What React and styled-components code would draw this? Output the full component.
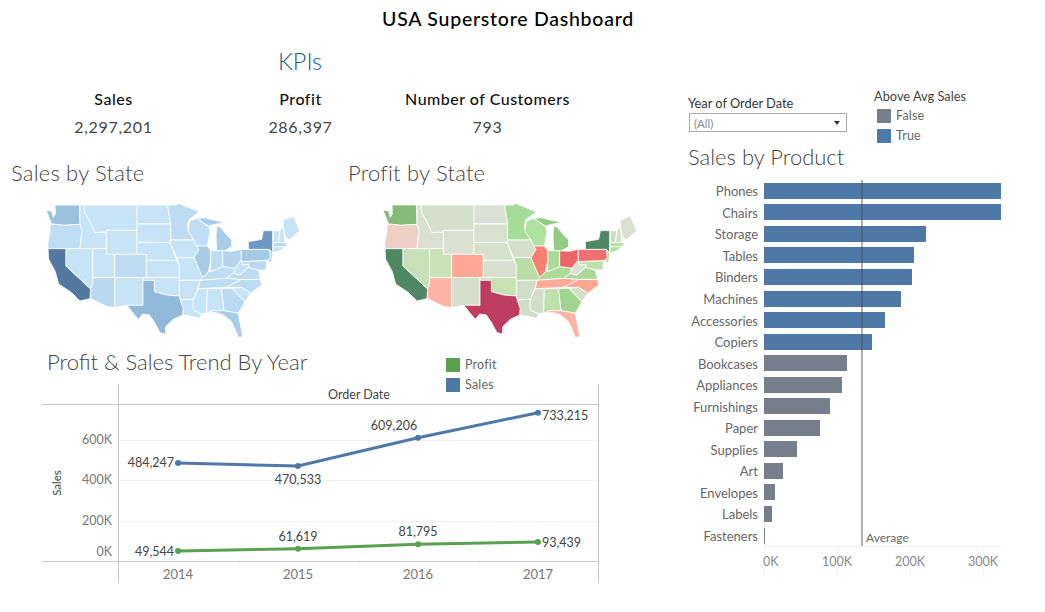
import React from "react";
import styled, { createGlobalStyle } from "styled-components";

const GlobalStyle = createGlobalStyle`
  html, body { margin: 0; padding: 0; background: #fff; }
  body { font-family: "Lato", "Open Sans", sans-serif; color: #333; }
`;

const Page = styled.div`
  width: 1045px;
  height: 612px;
  overflow: hidden;
  background: #fff;
`;
const Header = styled.h1`
  margin: 0;
  height: 38px;
  line-height: 38px;
  text-align: center;
  font-size: 19.5px;
  font-weight: 500;
  letter-spacing: 0.75px;
  color: #000;
  width: 1016px;
`;
const Columns = styled.div`
  display: grid;
  grid-template-columns: 667px 378px;
`;
const Left = styled.div`
  display: flex;
  flex-direction: column;
`;
const KpiHeading = styled.div`
  width: 600px;
  height: 46px;
  line-height: 46px;
  text-align: center;
  font-size: 23.5px;
  font-weight: 300;
  color: #1f5f7f;
`;
const KpiRow = styled.div`
  display: grid;
  grid-template-columns: repeat(3, 187px);
  margin-left: 20px;
  height: 76px;
`;
const Kpi = styled.div`
  text-align: center;
`;
const KpiLabel = styled.div`
  height: 30px;
  line-height: 30px;
  font-size: 16px;
  font-weight: 500;
  letter-spacing: 0.5px;
  color: #111;
`;
const KpiValue = styled.div`
  height: 26px;
  line-height: 26px;
  font-size: 16px;
  letter-spacing: 0.7px;
  color: #444;
`;
const Maps = styled.div`
  display: grid;
  grid-template-columns: 337px 330px;
`;
const SectionTitle = styled.h2`
  margin: 0;
  height: 30px;
  line-height: 26px;
  font-size: 22px;
  font-weight: 300;
  letter-spacing: 0.2px;
  color: #444;
  padding-left: 11px;
`;
const MapSvg = styled.svg`
  display: block;
  width: 330px;
  height: 160px;
`;
const TrendHeader = styled.div`
  display: flex;
  height: 34px;
  padding-left: 47px;
`;
const TrendTitle = styled.h2`
  margin: 0;
  width: 399px;
  line-height: 24px;
  font-size: 22px;
  font-weight: 300;
  color: #444;
`;
const TrendLegend = styled.div`
  display: flex;
  flex-direction: column;
  gap: 6px;
  padding-top: 8px;
  position: relative;
  z-index: 1;
`;
const LegendRow = styled.div`
  display: flex;
  align-items: center;
  gap: 5px;
  height: 14px;
  font-size: 12.5px;
  letter-spacing: 0.2px;
  color: #666;
`;
const LegendText = styled.span`
  position: relative;
  top: -1px;
`;
const Swatch = styled.span`
  width: 14px;
  height: 14px;
  background: ${(p) => p.$color};
  flex: none;
`;
const TrendSvg = styled.svg`
  display: block;
  width: 660px;
  height: 200px;
  text {
    font-family: "Lato", "Open Sans", sans-serif;
  }
`;
const Right = styled.div`
  display: flex;
  flex-direction: column;
  padding: 50px 0 0 21px;
`;
const Controls = styled.div`
  display: flex;
  height: 57px;
`;
const Filter = styled.div`
  width: 160px;
  margin-right: 26px;
  padding-top: 7px;
`;
const FilterLabel = styled.div`
  height: 18px;
  line-height: 16px;
  font-size: 12.8px;
  color: #333;
`;
const Select = styled.div`
  box-sizing: border-box;
  width: 158px;
  height: 19px;
  margin-left: 1px;
  padding: 1px 6px 0 4px;
  border: 1px solid #aaa;
  display: flex;
  align-items: center;
  justify-content: space-between;
  font-size: 11.5px;
  color: #888;
`;
const Caret = styled.span`
  width: 0;
  height: 0;
  border-left: 3px solid transparent;
  border-right: 3px solid transparent;
  border-top: 4px solid #333;
`;
const AvgLegend = styled.div`
  display: flex;
  flex-direction: column;
`;
const AvgTitle = styled.div`
  height: 21px;
  line-height: 16px;
  font-size: 12.8px;
  color: #444;
`;
const AvgItems = styled.div`
  display: flex;
  flex-direction: column;
  gap: 6px;
  padding-left: 3px;
`;
const ProductTitle = styled.h2`
  margin: 0;
  height: 35px;
  line-height: 24px;
  font-size: 22px;
  font-weight: 300;
  color: #444;
`;
const BarPlot = styled.div`
  position: relative;
  margin-left: -28px;
  width: 341px;
`;
const BarRow = styled.div`
  display: grid;
  grid-template-columns: 98px 6px 237px;
  height: 21.56px;
  align-items: center;
`;
const BarLabel = styled.div`
  text-align: right;
  font-size: 13px;
  color: #666;
  line-height: 18px;
  padding-top: 1px;
`;
const BarTrack = styled.div`
  grid-column: 3;
  height: 100%;
  display: flex;
  align-items: center;
  box-shadow: inset 1px 0 0 #eee;
`;
const Bar = styled.div`
  height: 16px;
  background: ${(p) => (p.$above ? "#4e79a7" : "#767f8b")};
`;
const AverageLine = styled.div`
  position: absolute;
  left: 201px;
  top: 0;
  bottom: 0;
  width: 2px;
  background: rgba(70, 70, 70, 0.42);
`;
const AverageText = styled.span`
  position: absolute;
  left: 206px;
  bottom: 1px;
  font-size: 12px;
  color: #666;
`;
const Axis = styled.div`
  display: flex;
  width: 237px;
  margin-left: 76px;
  border-top: 1px solid #eee;
`;
const Tick = styled.div`
  width: 73px;
  flex: none;
  height: 28px;
  box-shadow: inset 1px 0 0 #f0f0f0;
  position: relative;
`;
const TickLabel = styled.span`
  position: absolute;
  top: 7px;
  left: ${(p) => (p.$first ? "-1px" : "0")};
  transform: ${(p) => (p.$first ? "none" : "translateX(-50%)")};
  font-size: 12.5px;
  line-height: 15px;
  color: #888;
  background: #fff;
`;

const states = {
  WA: "165,45 238,45 240,103 192,106 165,103 155,102 148,85 138,60 155,63 160,82 166,72",
  OR: "150,103 165,103 192,106 240,103 246,118 240,176 144,176 143,160 150,125",
  CA: "144,176 198,176 198,228 272,297 270,326 240,333 215,308 176,282 166,245 146,208",
  NV: "198,176 278,176 278,280 272,297 198,228",
  ID: "240,45 252,45 255,70 270,95 285,128 319,126 319,176 240,176 246,118 240,103",
  MT: "252,45 411,45 411,121 319,121 319,126 285,128 270,95 255,70",
  WY: "319,121 411,121 411,193 319,193",
  UT: "278,176 319,176 319,193 344,193 344,263 278,263",
  CO: "344,193 439,193 439,263 344,263",
  AZ: "278,263 344,263 344,352 322,350 272,326 272,297 278,280",
  NM: "344,263 429,263 429,346 381,346 347,352 344,352",
  ND: "411,45 503,45 512,102 411,102",
  SD: "411,102 512,102 512,160 500,157 411,157",
  NE: "411,157 500,157 512,160 530,211 439,211 439,193 411,193",
  KS: "439,211 530,211 538,225 538,263 439,263",
  OK: "429,263 538,263 538,318 500,315 463,305 463,271 429,271",
  TX: "429,271 463,271 463,305 500,315 538,318 541,330 550,355 548,375 520,388 497,410 497,432 480,428 462,395 448,375 428,372 415,388 398,368 381,346 429,346",
  MN: "503,45 530,45 535,40 598,65 568,88 562,105 565,125 582,150 512,150 512,102",
  IA: "512,150 582,150 597,178 582,203 530,203 518,175 512,160",
  MO: "530,203 582,203 600,245 608,262 600,271 538,271 538,225",
  AR: "538,271 600,271 597,285 580,328 541,330 538,318",
  LA: "541,330 580,328 580,360 605,372 600,385 570,378 548,375 550,355",
  WI: "565,95 590,85 618,105 625,108 630,125 622,168 590,168 582,150 565,125 568,88",
  UP: "590,85 612,83 640,90 675,97 650,102 625,108",
  IL: "590,168 622,168 632,182 632,215 625,245 608,262 600,245 582,203 597,178",
  IN: "632,182 668,182 668,230 650,238 632,245",
  OH: "668,182 695,184 724,178 724,210 705,235 668,230",
  MI: "650,110 660,110 672,125 695,150 695,170 675,182 650,182 648,135",
  KY: "600,271 608,262 625,245 632,245 650,238 668,230 705,235 700,250 680,265",
  TN: "600,271 680,265 725,268 680,292 595,296",
  NC: "725,268 782,268 785,285 752,310 725,292 680,292",
  VA: "680,265 700,250 720,255 745,232 775,240 782,268 725,268",
  WV: "700,250 705,235 724,210 730,225 748,222 745,232 720,255",
  PA: "724,178 745,178 808,178 812,205 800,212 724,215",
  NY: "745,155 785,148 790,122 818,122 818,188 808,178 745,178",
  MD: "724,215 800,212 798,240 775,240 745,232 748,222 730,225",
  NJ: "808,178 818,188 815,218 800,212 812,205",
  VT: "820,122 840,122 835,158 820,158",
  NH: "840,122 850,108 855,158 835,158",
  MA: "820,158 860,158 860,170 820,170",
  CT: "820,170 855,170 840,182 818,188",
  ME: "850,108 850,90 880,78 899,122 868,150 855,140",
  MS: "595,296 622,296 620,368 605,372 580,360 580,328",
  AL: "622,296 665,296 672,362 640,362 625,368 620,368",
  GA: "665,296 695,295 735,335 715,370 672,362",
  SC: "695,295 725,292 752,310 735,335",
  FL: "625,368 640,362 672,362 715,370 728,440 715,442 695,395 670,375 650,368",
};

const salesColors = {
  CA: "#54789f", NY: "#6d98c2", TX: "#92b8da", WA: "#9bc1df", PA: "#a6cae6", FL: "#a8cde8",
  IL: "#a9cce7", MI: "#a9cde8", OH: "#b2d4ec", VA: "#bcdcf2", NC: "#bcdcf2", GA: "#b9daf1",
  MN: "#bddcf2", IN: "#bcdcf1", AZ: "#b8d9f0", CO: "#bddcf2", TN: "#bcdcf2", KY: "#c0def3",
  WI: "#bfddf3", NJ: "#b3d5ed", MA: "#b6d7ee", UP: "#a9cde8", MD: "#b9daf0", OR: "#c0def3",
};
const profitColors = {
  WA: "#85bb76", OR: "#eecfc4", CA: "#4f8863", NV: "#c8dfb9", ID: "#d9e0d0", MT: "#d4e0cb",
  WY: "#dbe0d2", UT: "#c9e1ba", CO: "#fea893", AZ: "#ffb3a7", NM: "#d3dfca", ND: "#dae0d3",
  SD: "#d8e0d0", NE: "#d5e1cb", KS: "#d7dfcf", OK: "#c6e2b2", TX: "#bd3c60", MN: "#a7db98",
  IA: "#d4e0ca", MO: "#b8dda7", AR: "#cfdfc5", LA: "#d1dec7", WI: "#aee0a0", IL: "#f97f70",
  IN: "#a9dc98", MI: "#94cb87", UP: "#94cb87", OH: "#ec6669", KY: "#addb9a", TN: "#ffab97",
  MS: "#d1dfc8", AL: "#bde0ac", GA: "#9fd590", FL: "#ffb3a7", SC: "#d3dfc9", NC: "#ffa792",
  VA: "#a8db99", WV: "#dbe0d4", PA: "#f07072", NY: "#4f8863", ME: "#dbe0d6", VT: "#cee0c3",
  NH: "#d5dfcc", MA: "#b9dfa9", CT: "#b0dd9e", NJ: "#aadd9a", MD: "#bfe0ae",
};

function UsaMap({ colors, base }) {
  return (
    <MapSvg viewBox="0 0 990 480">
      {Object.entries(states).map(([id, pts]) => (
        <polygon key={id} points={pts} fill={colors[id] || base} stroke="#fff" strokeWidth="2.4" strokeLinejoin="round" />
      ))}
    </MapSvg>
  );
}

const years = [
  { x: 178, label: "2014" },
  { x: 298, label: "2015" },
  { x: 418, label: "2016" },
  { x: 538, label: "2017" },
];
const salesLine = [463, 466, 437.7, 412.7];
const profitLine = [551, 548.7, 544.3, 542];
const pointLabels = [
  ["484,247", 174, 467, "end"], ["470,533", 298, 484, "middle"], ["609,206", 394, 430, "middle"], ["733,215", 542, 420, "start"],
  ["49,544", 174, 556, "end"], ["61,619", 298, 541, "middle"], ["81,795", 418, 536, "middle"], ["93,439", 542, 547, "start"],
];
const yTicks = [["600K", 444], ["400K", 484], ["200K", 525], ["0K", 556]];

function TrendChart() {
  const poly = (ys) => ys.map((y, i) => `${years[i].x},${y}`).join(" ");
  return (
    <TrendSvg viewBox="0 384 660 200">
      {[440.5, 480.5, 521.5].map((y) => (
        <line key={y} x1="118" x2="598" y1={y} y2={y} stroke="#f0f0f0" />
      ))}
      <line x1="42" x2="598" y1="404.5" y2="404.5" stroke="#c8c8c8" />
      <line x1="42" x2="598" y1="561.5" y2="561.5" stroke="#c8c8c8" />
      <line x1="118.5" x2="118.5" y1="384" y2="583" stroke="#c8c8c8" />
      <line x1="598.5" x2="598.5" y1="384" y2="583" stroke="#c8c8c8" />
      {[238.5, 358.5, 478.5].map((x) => (
        <line key={x} x1={x} x2={x} y1="562" y2="566" stroke="#eee" />
      ))}
      <polyline points={poly(salesLine)} fill="none" stroke="#4e79a7" strokeWidth="3" />
      <polyline points={poly(profitLine)} fill="none" stroke="#59a14f" strokeWidth="3" />
      {years.map((y, i) => (
        <g key={y.label}>
          <circle cx={y.x} cy={salesLine[i]} r="3" fill="#4e79a7" />
          <circle cx={y.x} cy={profitLine[i]} r="3" fill="#59a14f" />
          <text x={y.x} y="579" textAnchor="middle" fontSize="13" fill="#777">{y.label}</text>
        </g>
      ))}
      {pointLabels.map(([t, x, y, a]) => (
        <text key={t} x={x} y={y} textAnchor={a} fontSize="12.5" fill="#444">{t}</text>
      ))}
      {yTicks.map(([t, y]) => (
        <text key={t} x="112" y={y} textAnchor="end" fontSize="12.5" fill="#777">{t}</text>
      ))}
      <text x="359" y="399" textAnchor="middle" fontSize="12.5" fill="#444">Order Date</text>
      <text transform="translate(61 483) rotate(-90)" textAnchor="middle" fontSize="11.5" fill="#444">Sales</text>
    </TrendSvg>
  );
}

const products = [
  ["Phones", 237, true], ["Chairs", 237, true], ["Storage", 162, true], ["Tables", 150, true],
  ["Binders", 148, true], ["Machines", 137, true], ["Accessories", 121, true], ["Copiers", 108, true],
  ["Bookcases", 83, false], ["Appliances", 78, false], ["Furnishings", 66, false], ["Paper", 56, false],
  ["Supplies", 33, false], ["Art", 19, false], ["Envelopes", 11, false], ["Labels", 8, false], ["Fasteners", 1, false],
];

export default function App() {
  return (
    <Page>
      <GlobalStyle />
      <Header>USA Superstore Dashboard</Header>
      <Columns>
        <Left>
          <KpiHeading>KPIs</KpiHeading>
          <KpiRow>
            <Kpi><KpiLabel>Sales</KpiLabel><KpiValue>2,297,201</KpiValue></Kpi>
            <Kpi><KpiLabel>Profit</KpiLabel><KpiValue>286,397</KpiValue></Kpi>
            <Kpi><KpiLabel>Number of Customers</KpiLabel><KpiValue>793</KpiValue></Kpi>
          </KpiRow>
          <Maps>
            <div>
              <SectionTitle>Sales by State</SectionTitle>
              <UsaMap colors={salesColors} base="#c7e3f6" />
            </div>
            <div>
              <SectionTitle>Profit by State</SectionTitle>
              <UsaMap colors={profitColors} base="#d5e0cc" />
            </div>
          </Maps>
          <TrendHeader>
            <TrendTitle>Profit &amp; Sales Trend By Year</TrendTitle>
            <TrendLegend>
              <LegendRow><Swatch $color="#59a14f" /><LegendText>Profit</LegendText></LegendRow>
              <LegendRow><Swatch $color="#4e79a7" /><LegendText>Sales</LegendText></LegendRow>
            </TrendLegend>
          </TrendHeader>
          <TrendChart />
        </Left>
        <Right>
          <Controls>
            <Filter>
              <FilterLabel>Year of Order Date</FilterLabel>
              <Select>(All)<Caret /></Select>
            </Filter>
            <AvgLegend>
              <AvgTitle>Above Avg Sales</AvgTitle>
              <AvgItems>
                <LegendRow><Swatch $color="#767f8b" /><LegendText>False</LegendText></LegendRow>
                <LegendRow><Swatch $color="#4e79a7" /><LegendText>True</LegendText></LegendRow>
              </AvgItems>
            </AvgLegend>
          </Controls>
          <ProductTitle>Sales by Product</ProductTitle>
          <BarPlot>
            {products.map(([name, w, above]) => (
              <BarRow key={name}>
                <BarLabel>{name}</BarLabel>
                <BarTrack>
                  <Bar $above={above} style={{ width: w }} />
                </BarTrack>
              </BarRow>
            ))}
            <AverageLine />
            <AverageText>Average</AverageText>
          </BarPlot>
          <Axis>
            {["0K", "100K", "200K", "300K"].map((t, i) => (
              <Tick key={t}><TickLabel $first={i === 0}>{t}</TickLabel></Tick>
            ))}
          </Axis>
        </Right>
      </Columns>
    </Page>
  );
}
